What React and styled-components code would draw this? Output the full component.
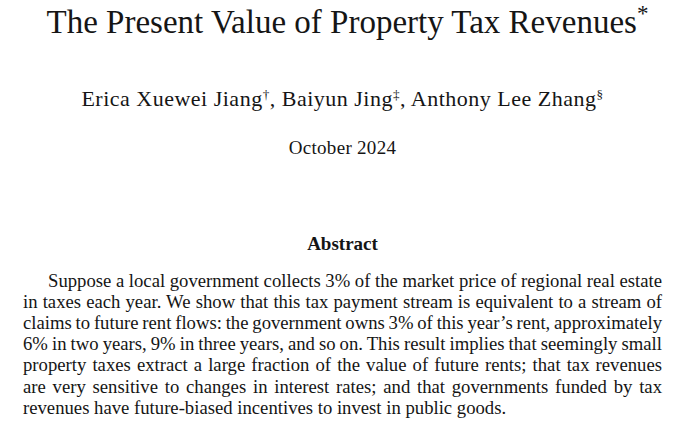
import React from 'react';
import styled, { createGlobalStyle } from 'styled-components';

const GlobalStyle = createGlobalStyle`
  html, body {
    margin: 0;
    padding: 0;
    background: #ffffff;
  }
`;

const Page = styled.div`
  width: 680px;
  height: 426px;
  overflow: hidden;
  box-sizing: border-box;
  padding: 2px 18px 0 23px;
  font-family: "Liberation Serif", "Times New Roman", serif;
  color: #151515;
  display: flex;
  flex-direction: column;
  align-items: center;
`;

const Title = styled.h1`
  margin: 0;
  padding: 0 0 0 10px;
  font-weight: normal;
  font-size: 33px;
  line-height: 38px;
  text-align: center;
`;

const Mark = styled.sup`
  font-size: ${(p) => p.$size || '0.6em'};
  line-height: 1;
  vertical-align: ${(p) => p.$raise || '0.5em'};
`;

const Authors = styled.div`
  margin-top: 46px;
  font-size: 22px;
  line-height: 24px;
  letter-spacing: 0.5px;
  text-align: center;
`;

const DateLine = styled.div`
  margin-top: 26px;
  font-size: 19px;
  line-height: 22px;
  letter-spacing: 0.3px;
  text-align: center;
`;

const AbstractHeading = styled.h2`
  margin: 74px 0 0;
  font-size: 19px;
  line-height: 22px;
  font-weight: bold;
  text-align: center;
`;

const Paragraph = styled.div`
  align-self: stretch;
  margin-top: 15px;
  font-size: 18.7px;
  line-height: 21.2px;
  word-spacing: -1px;
`;

const Line = styled.div`
  text-align: justify;
  text-align-last: ${(p) => (p.$last ? 'left' : 'justify')};
  text-indent: ${(p) => (p.$indent ? '25px' : '0')};
  word-spacing: ${(p) => (p.$last ? '0' : 'inherit')};
  white-space: nowrap;
`;

const lines = [
  'Suppose a local government collects 3% of the market price of regional real estate',
  'in taxes each year. We show that this tax payment stream is equivalent to a stream of',
  'claims to future rent flows: the government owns 3% of this year\u2019s rent, approximately',
  '6% in two years, 9% in three years, and so on. This result implies that seemingly small',
  'property taxes extract a large fraction of the value of future rents; that tax revenues',
  'are very sensitive to changes in interest rates; and that governments funded by tax',
  'revenues have future-biased incentives to invest in public goods.',
];

const App = () => {
  return (
    <>
      <GlobalStyle />
      <Page>
        <Title>
          The Present Value of Property Tax Revenues<Mark $size="0.7em">*</Mark>
        </Title>
        <Authors>
          Erica Xuewei Jiang<Mark>†</Mark>, Baiyun Jing<Mark>‡</Mark>, Anthony Lee Zhang<Mark>§</Mark>
        </Authors>
        <DateLine>October 2024</DateLine>
        <AbstractHeading>Abstract</AbstractHeading>
        <Paragraph>
          {lines.map((text, i) => (
            <Line key={i} $indent={i === 0} $last={i === lines.length - 1}>
              {text}
            </Line>
          ))}
        </Paragraph>
      </Page>
    </>
  );
};

export default App;
